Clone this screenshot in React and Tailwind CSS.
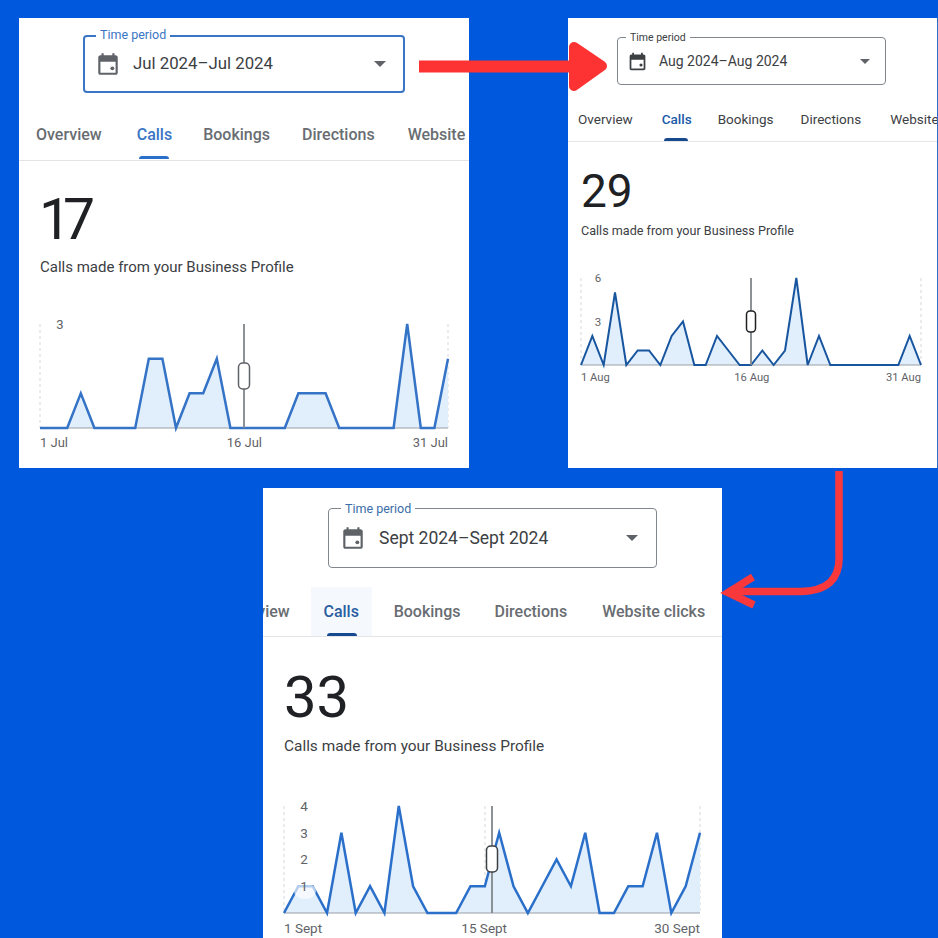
import React from 'react';

const EventIcon = ({ className }) => (
  <svg viewBox="0 0 24 24" className={className} fill="currentColor">
    <path d="M19 4h-1V2h-2v2H8V2H6v2H5c-1.11 0-1.99.9-1.99 2L3 20c0 1.1.89 2 2 2h14c1.1 0 2-.9 2-2V6c0-1.1-.9-2-2-2zm0 16H5V10h14v10z" />
    <circle cx="16" cy="16" r="1.8" />
  </svg>
);

const TimePeriod = ({ value, frame, label, icon, text, caret, gap }) => (
  <div className={`relative flex items-center rounded-[4px] ${frame}`}>
    <span className={`absolute bg-white px-[4px] leading-none ${label}`}>Time period</span>
    <EventIcon className={`shrink-0 ${icon}`} />
    <span className={`text-[#3c4043] ${text} ${gap}`}>{value}</span>
    <span className={`ml-auto h-0 w-0 border-x-solid border-x-transparent border-t-solid border-t-[#5f6368] ${caret}`} />
  </div>
);

const Chart = ({ data, max, width, height, color, ticks, guides, handle, glow, fontSize, strokeWidth }) => {
  const stepX = width / (data.length - 1);
  const y = (v) => height - (v / max) * height;
  const points = data.map((v, i) => `${(i * stepX).toFixed(2)},${y(v).toFixed(2)}`).join(' ');
  return (
    <svg width={width + 4} height={height + 2} viewBox={`-2 0 ${width + 4} ${height + 2}`} className="ml-[-2px] block overflow-visible">
      {guides.map((x) => (
        <line key={x} x1={x} x2={x} y1={0} y2={height} stroke="#d5d7da" strokeWidth="1" strokeDasharray="3 3" />
      ))}
      <polygon points={`0,${height} ${points} ${width},${height}`} fill="#e1eefc" />
      <line x1={0} x2={width} y1={height} y2={height} stroke="#9aa0a6" strokeWidth="1" />
      <polyline points={points} fill="none" stroke={color} strokeWidth={strokeWidth} strokeLinejoin="miter" />
      {glow && <ellipse cx={glow.x} cy={glow.y} rx="11" ry="8" fill="#ffffff" fillOpacity="0.65" />}
      {ticks.map((t) => (
        <text key={t.label} x={t.x} y={y(t.value) + fontSize * 0.36} fontSize={fontSize} fill="#5f6368" textAnchor="middle" fontFamily="Roboto, sans-serif">
          {t.label}
        </text>
      ))}
      <line x1={handle.x} x2={handle.x} y1={0} y2={height} stroke="#80868b" strokeWidth="1.8" />
      <rect x={handle.x - handle.w / 2} y={handle.y} width={handle.w} height={handle.h} rx={handle.w / 2.6} fill="#fff" stroke={handle.c} strokeWidth="1.5" />
    </svg>
  );
};

const julData = [0, 0, 0, 1, 0, 0, 0, 0, 2, 2, 0, 1, 1, 2, 0, 0, 0, 0, 0, 1, 1, 1, 0, 0, 0, 0, 0, 3, 0, 0, 2];
const augData = [0, 2, 0, 5, 0, 1, 1, 0, 2, 3, 0, 0, 2, 1, 0, 0, 1, 0, 1, 6, 0, 2, 0, 0, 0, 0, 0, 0, 0, 2, 0];
const septData = [0, 1, 1, 0, 3, 0, 1, 0, 4, 1, 0, 0, 0, 1, 1, 3, 1, 0, 1, 2, 1, 3, 0, 0, 1, 1, 3, 0, 1, 3];

export default function App() {
  return (
    <div className="relative h-[938px] w-[938px] overflow-hidden bg-[#0059dc] pt-[18px] font-['Roboto',sans-serif]">
      <div className="flex gap-[99px] pl-[19px]">
        {/* July */}
        <section className="h-[450px] w-[450px] overflow-hidden bg-white">
          <div className="pl-[64px] pt-[17px]">
            <TimePeriod
              value="Jul 2024–Jul 2024"
              frame="h-[58px] w-[322px] border-2 border-[#3a76c4] pl-[10px] pr-[17px]"
              label="-top-[8px] left-[11px] text-[12.5px] text-[#3a76c4]"
              icon="h-[26px] w-[26px] text-[#5f6368]"
              text="text-[16.8px]"
              gap="ml-[12px]"
              caret="border-x-[6px] border-t-[6px]"
            />
          </div>
          <nav className="mt-[20px] flex h-[48px] items-center whitespace-nowrap border-b border-[#e3e5e7] pb-[4px] pl-[17px] text-[16px] font-medium text-[#696d72]">
            <span>Overview</span>
            <span className="relative ml-[35px] text-[#3a76c4]">
              Calls
              <i className="absolute bottom-[-12px] left-[2px] h-[3px] w-[30px] rounded-t-[3px] bg-[#2a6fc9]" />
            </span>
            <span className="ml-[31px]">Bookings</span>
            <span className="ml-[32px]">Directions</span>
            <span className="ml-[33px]">Website</span>
          </nav>
          <div className="pl-[21px]">
            <p className="ml-[-1px] mt-[26px] text-[57px] leading-[66px] tracking-[-8px] text-[#202124]">17</p>
            <p className="mt-[4px] text-[15px] leading-[20px] text-[#3c4043]">Calls made from your Business Profile</p>
            <div className="mt-[47px]">
              <Chart
                data={julData}
                max={3}
                width={408}
                height={104}
                color="#3473c6"
                strokeWidth={2.5}
                ticks={[{ label: '3', value: 3, x: 20 }]}
                guides={[0, 408]}
                handle={{ x: 204, y: 39, w: 11, h: 26, c: '#5f6368' }}
                fontSize={13}
              />
              <div className="mt-[3px] flex w-[408px] justify-between text-[13px] text-[#5f6368]">
                <span>1 Jul</span>
                <span className="ml-[8px]">16 Jul</span>
                <span>31 Jul</span>
              </div>
            </div>
          </div>
        </section>

        {/* August */}
        <section className="h-[450px] w-[370px] overflow-hidden border-r border-[#2a6fc9] bg-white">
          <div className="pl-[49px] pt-[19px]">
            <TimePeriod
              value="Aug 2024–Aug 2024"
              frame="h-[48px] w-[269px] border border-[#80868b] pl-[9px] pr-[15px]"
              label="-top-[5px] left-[8px] text-[10.5px] text-[#3c4043]"
              icon="h-[21px] w-[21px] text-[#3c4043]"
              text="text-[14px]"
              gap="ml-[11px]"
              caret="border-x-[5px] border-t-[5px]"
            />
          </div>
          <nav className="mt-[12px] flex h-[45px] items-center whitespace-nowrap border-b border-[#e3e5e7] pl-[10px] text-[13.5px] text-[#3c4043]">
            <span>Overview</span>
            <span className="relative ml-[29px] font-medium text-[#1a5aa8]">
              Calls
              <i className="absolute bottom-[-12px] left-[2px] h-[3px] w-[24px] rounded-t-[3px] bg-[#17498f]" />
            </span>
            <span className="ml-[26px]">Bookings</span>
            <span className="ml-[27px]">Directions</span>
            <span className="ml-[29px]">Website</span>
          </nav>
          <div className="pl-[13px]">
            <p className="mt-[22px] text-[46px] leading-[54px] text-[#202124]">29</p>
            <p className="mt-[5px] text-[12.6px] leading-[16px] text-[#3c4043]">Calls made from your Business Profile</p>
            <div className="mt-[39px]">
              <Chart
                data={augData}
                max={6}
                width={340}
                height={87}
                color="#17559f"
                strokeWidth={2}
                ticks={[{ label: '6', value: 6, x: 17 }, { label: '3', value: 3, x: 17 }]}
                guides={[0, 340]}
                handle={{ x: 170, y: 33, w: 9, h: 21, c: '#202124' }}
                fontSize={11.5}
              />
              <div className="mt-[3px] flex w-[340px] justify-between text-[11.2px] text-[#5f6368]">
                <span>1 Aug</span>
                <span className="ml-[8px]">16 Aug</span>
                <span>31 Aug</span>
              </div>
            </div>
          </div>
        </section>
      </div>

      {/* September */}
      <section className="ml-[263px] mt-[20px] h-[450px] w-[459px] overflow-hidden bg-white">
        <div className="pl-[65px] pt-[20px]">
          <TimePeriod
            value="Sept 2024–Sept 2024"
            frame="h-[60px] w-[329px] border border-[#80868b] pl-[11px] pr-[18px]"
            label="-top-[6px] left-[12px] text-[12.5px] text-[#3a6ea8]"
            icon="h-[26px] w-[26px] text-[#5f6368]"
            text="text-[17.5px]"
            gap="ml-[13px]"
            caret="border-x-[6px] border-t-[6px]"
          />
        </div>
        <nav className="mt-[19px] flex h-[50px] items-center whitespace-nowrap border-b border-[#e3e5e7] text-[16px] font-medium text-[#696d72]">
          <span className="ml-[-39px]">Overview</span>
          <span className="relative ml-[21px] flex h-full w-[61px] items-center justify-center bg-[#f5f9fd] text-[#2a5d9f]">
            Calls
            <i className="absolute bottom-0 left-[16px] h-[3px] w-[30px] rounded-t-[3px] bg-[#17498f]" />
          </span>
          <span className="ml-[22px]">Bookings</span>
          <span className="ml-[34px]">Directions</span>
          <span className="ml-[35px]">Website clicks</span>
        </nav>
        <div className="pl-[21px]">
          <p className="mt-[27px] text-[58px] leading-[66px] text-[#202124]">33</p>
          <p className="mt-[6px] text-[15.4px] leading-[20px] text-[#3c4043]">Calls made from your Business Profile</p>
          <div className="mt-[50px]">
            <Chart
              data={septData}
              max={4}
              width={416}
              height={107}
              color="#2a6fc9"
              strokeWidth={2.5}
              ticks={[1, 2, 3, 4].map((v) => ({ label: String(v), value: v, x: 20 }))}
              guides={[0, 201, 416]}
              handle={{ x: 208, y: 40, w: 11, h: 26, c: '#3c4043' }}
              glow={{ x: 21, y: 85 }}
              fontSize={13.5}
            />
            <div className="mt-[3px] flex w-[416px] justify-between text-[13.5px] text-[#5f6368]">
              <span>1 Sept</span>
              <span className="mr-[8px]">15 Sept</span>
              <span>30 Sept</span>
            </div>
          </div>
        </div>
      </section>

      {/* Red arrows over the panels */}
      <svg width="938" height="938" className="pointer-events-none absolute left-0 top-0">
        <path d="M419 66.5H572" fill="none" stroke="#fd3333" strokeWidth="12" />
        <path d="M574 47 L602 66 L574 86 Z" fill="#fd3333" stroke="#fd3333" strokeWidth="10" strokeLinejoin="round" />
        <path d="M839 471V555Q841 591 800 591.5H728" fill="none" stroke="#f9383c" strokeWidth="7.5" />
        <path d="M753 577 L728 592.5 L754 605" fill="none" stroke="#f9383c" strokeWidth="7.5" strokeLinejoin="miter" />
      </svg>
    </div>
  );
}
